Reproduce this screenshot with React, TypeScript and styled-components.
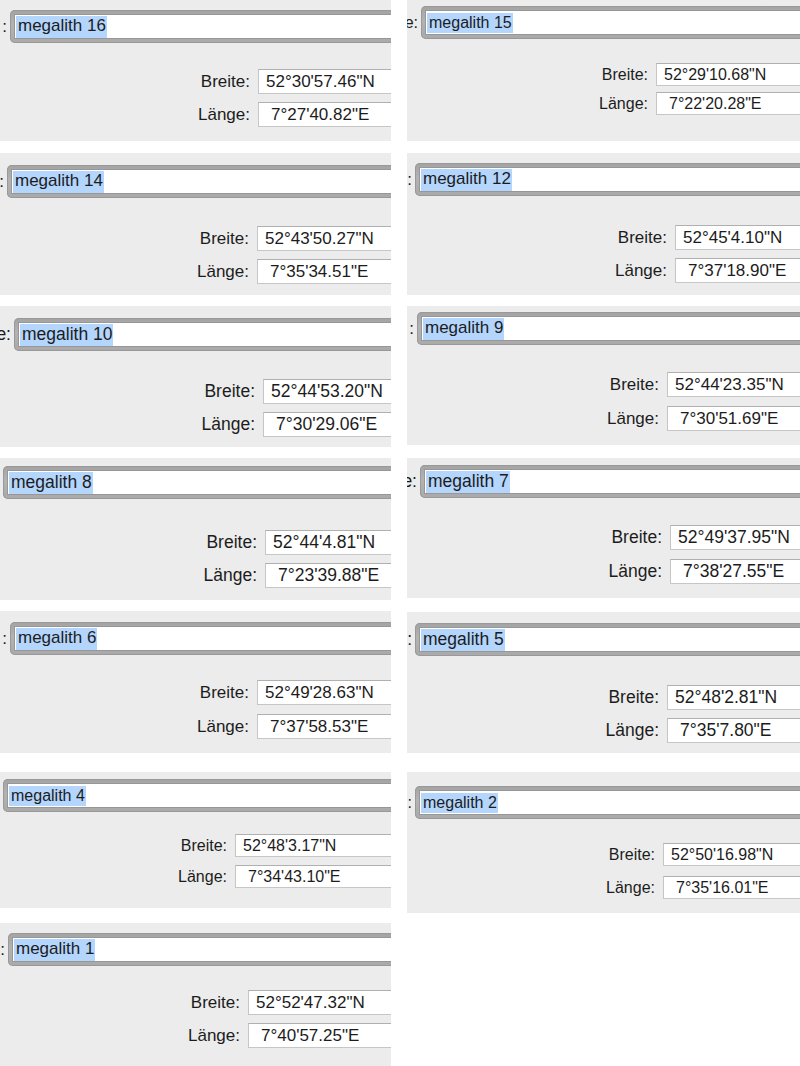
import React from 'react';
import styled, { createGlobalStyle } from 'styled-components';

interface Entry {
    name: string;
    lat: string;
    lon: string;
    prefix: string;
    gap: number;
    height: number;
    ringTop: number;
    ringLeft: number;
    coordTop: number;
    coordLeft: number;
    step: number;
    size: number;
}

const GlobalStyle = createGlobalStyle`
    html, body {
        margin: 0;
        padding: 0;
        background: #ffffff;
    }
    body {
        font-family: 'Liberation Sans', Arial, sans-serif;
        color: #1c1c1c;
    }
`;

const Page = styled.div`
    display: flex;
    width: 800px;
    height: 1066px;
    overflow: hidden;
    background: #ffffff;
`;

const Column = styled.div<{ $width: number; $offset: number }>`
    display: flex;
    flex-direction: column;
    width: ${(p) => p.$width}px;
    margin-left: ${(p) => p.$offset}px;
    flex-shrink: 0;
`;

const Panel = styled.section<{ $gap: number; $height: number; $size: number; $top: number }>`
    margin-top: ${(p) => p.$gap}px;
    height: ${(p) => p.$height}px;
    padding-top: ${(p) => p.$top}px;
    box-sizing: border-box;
    background: #ececec;
    overflow: hidden;
    font-size: ${(p) => p.$size}px;
`;

const NameRow = styled.div<{ $lead: number }>`
    display: grid;
    grid-template-columns: ${(p) => p.$lead}px 1fr;
    align-items: center;
`;

const Prefix = styled.div`
    display: flex;
    justify-content: flex-end;
    padding-right: 3px;
    white-space: nowrap;
`;

const Ring = styled.div<{ $height: number }>`
    margin-right: -30px;
    height: ${(p) => p.$height}px;
    box-sizing: border-box;
    padding: 4px 0 4px 4px;
    border-radius: 5px;
    background: linear-gradient(#a3a3a3, #b3b3b3 45%, #a9a9a9);
    box-shadow: inset 0 0 0 1px #999999;
    display: flex;
`;

const NameField = styled.div`
    flex: 1;
    background: #ffffff;
    border: 1px solid #979797;
    border-right: none;
    display: flex;
    align-items: center;
    padding-left: 1px;
    padding-top: 1px;
    white-space: nowrap;
`;

const Selection = styled.span`
    background: #b4d5fc;
    padding: 1px 1px 2px 2px;
    line-height: 1.1;
`;

const Coords = styled.div<{ $top: number; $rowGap: number }>`
    margin-top: ${(p) => p.$top}px;
    display: flex;
    flex-direction: column;
    gap: ${(p) => p.$rowGap}px;
`;

const CoordRow = styled.div`
    display: flex;
    align-items: center;
`;

const Label = styled.div<{ $width: number }>`
    width: ${(p) => p.$width}px;
    padding-right: 8px;
    box-sizing: border-box;
    text-align: right;
    white-space: nowrap;
    flex-shrink: 0;
`;

const Value = styled.div<{ $height: number; $indent: number }>`
    flex: 1;
    margin-right: -20px;
    height: ${(p) => p.$height}px;
    box-sizing: border-box;
    background: #ffffff;
    border: 1px solid #c6c6c6;
    border-top-color: #b0b0b0;
    padding-left: ${(p) => p.$indent}px;
    display: flex;
    align-items: center;
    white-space: nowrap;
`;

const left: Entry[] = [
    { name: 'megalith 16', lat: '52°30\'57.46"N', lon: '7°27\'40.82"E', prefix: ':', gap: 0, height: 141, ringTop: 10, ringLeft: 10, coordTop: 69, coordLeft: 258, step: 33, size: 17 },
    { name: 'megalith 14', lat: '52°43\'50.27"N', lon: '7°35\'34.51"E', prefix: ':', gap: 12, height: 142, ringTop: 12, ringLeft: 7, coordTop: 73, coordLeft: 257, step: 33, size: 17 },
    { name: 'megalith 10', lat: '52°44\'53.20"N', lon: '7°30\'29.06"E', prefix: 'e:', gap: 11, height: 141, ringTop: 12, ringLeft: 14, coordTop: 73, coordLeft: 263, step: 33, size: 17.5 },
    { name: 'megalith 8', lat: '52°44\'4.81"N', lon: '7°23\'39.88"E', prefix: '', gap: 11, height: 142, ringTop: 8, ringLeft: 3, coordTop: 72, coordLeft: 265, step: 33, size: 17.5 },
    { name: 'megalith 6', lat: '52°49\'28.63"N', lon: '7°37\'58.53"E', prefix: ':', gap: 11, height: 142, ringTop: 11, ringLeft: 10, coordTop: 69, coordLeft: 257, step: 34, size: 17 },
    { name: 'megalith 4', lat: '52°48\'3.17"N', lon: '7°34\'43.10"E', prefix: '', gap: 19, height: 136, ringTop: 7, ringLeft: 3, coordTop: 62, coordLeft: 235, step: 31, size: 16 },
    { name: 'megalith 1', lat: '52°52\'47.32"N', lon: '7°40\'57.25"E', prefix: ':', gap: 15, height: 143, ringTop: 10, ringLeft: 8, coordTop: 67, coordLeft: 248, step: 33, size: 17 },
];

const right: Entry[] = [
    { name: 'megalith 15', lat: '52°29\'10.68"N', lon: '7°22\'20.28"E', prefix: 'e:', gap: 0, height: 141, ringTop: 6, ringLeft: 14, coordTop: 63, coordLeft: 249, step: 29, size: 16 },
    { name: 'megalith 12', lat: '52°45\'4.10"N', lon: '7°37\'18.90"E', prefix: ':', gap: 12, height: 142, ringTop: 10, ringLeft: 8, coordTop: 72, coordLeft: 268, step: 33, size: 17 },
    { name: 'megalith 9', lat: '52°44\'23.35"N', lon: '7°30\'51.69"E', prefix: ':', gap: 11, height: 139, ringTop: 6, ringLeft: 10, coordTop: 66, coordLeft: 260, step: 34, size: 17 },
    { name: 'megalith 7', lat: '52°49\'37.95"N', lon: '7°38\'27.55"E', prefix: 'e:', gap: 13, height: 140, ringTop: 7, ringLeft: 13, coordTop: 67, coordLeft: 263, step: 34, size: 17.5 },
    { name: 'megalith 5', lat: '52°48\'2.81"N', lon: '7°35\'7.80"E', prefix: ':', gap: 14, height: 141, ringTop: 11, ringLeft: 8, coordTop: 73, coordLeft: 260, step: 33, size: 17.5 },
    { name: 'megalith 2', lat: '52°50\'16.98"N', lon: '7°35\'16.01"E', prefix: ':', gap: 19, height: 141, ringTop: 14, ringLeft: 8, coordTop: 71, coordLeft: 256, step: 33, size: 16 },
];

const RING_H = 33;

const MegalithPanel: React.FC<{ entry: Entry }> = ({ entry }) => {
    const fieldH = Math.round(entry.size * 1.45);
    return (
        <Panel $gap={entry.gap} $height={entry.height} $size={entry.size} $top={entry.ringTop}>
            <NameRow $lead={entry.ringLeft}>
                <Prefix>{entry.prefix}</Prefix>
                <Ring $height={RING_H}>
                    <NameField>
                        <Selection>{entry.name}</Selection>
                    </NameField>
                </Ring>
            </NameRow>
            <Coords
                $top={entry.coordTop - entry.ringTop - RING_H}
                $rowGap={entry.step - fieldH}
            >
                <CoordRow>
                    <Label $width={entry.coordLeft}>Breite:</Label>
                    <Value $height={fieldH} $indent={7}>
                        {entry.lat}
                    </Value>
                </CoordRow>
                <CoordRow>
                    <Label $width={entry.coordLeft}>Länge:</Label>
                    <Value $height={fieldH} $indent={12}>
                        {entry.lon}
                    </Value>
                </CoordRow>
            </Coords>
        </Panel>
    );
};

export default function App() {
    return (
        <>
            <GlobalStyle />
            <Page>
                <Column $width={391} $offset={0}>
                    {left.map((e) => (
                        <MegalithPanel key={e.name} entry={e} />
                    ))}
                </Column>
                <Column $width={393} $offset={16}>
                    {right.map((e) => (
                        <MegalithPanel key={e.name} entry={e} />
                    ))}
                </Column>
            </Page>
        </>
    );
}
